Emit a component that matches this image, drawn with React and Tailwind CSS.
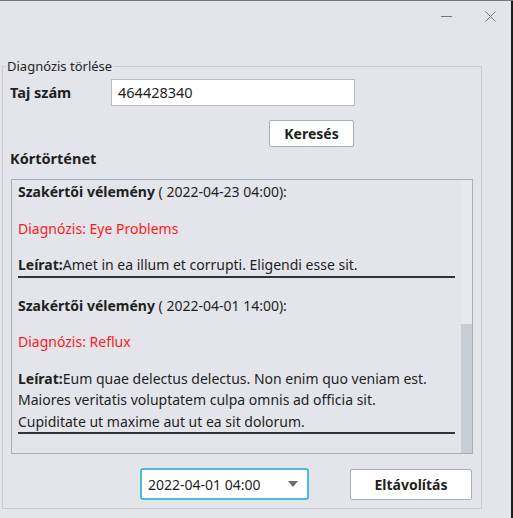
export default function App() {
  return (
    <div
      className="relative w-[513px] h-[518px] bg-[#e4e5ea] border-t border-[#7a7a7a] overflow-hidden text-[#1f1f1f]"
      style={{ fontFamily: '"Noto Sans", "Open Sans", sans-serif' }}
    >
      {/* ablak gombok */}
      <div className="flex justify-end items-center h-[30px] pr-[17px] gap-[33px]">
        <div className="w-[11px] h-px bg-[#777]" />
        <svg width="11" height="11" viewBox="0 0 11 11" className="text-[#777]">
          <path d="M0.5 0.5 L10.5 10.5 M10.5 0.5 L0.5 10.5" stroke="currentColor" strokeWidth="1" />
        </svg>
      </div>

      {/* asztal a jobb szélen */}
      <div className="absolute right-0 top-0 w-[2px] h-full bg-[#1c1c1c]" />

      <fieldset className="ml-[2px] mt-[27px] w-[480px] h-[451px] border border-[#c9cbd1] px-[7px] pb-[9px]">
        <legend className="text-[13px] leading-[17px] px-px -ml-[4px]">Diagnózis törlése</legend>

        <div className="flex items-center mt-[4px]">
          <span className="w-[101px] text-[14.5px] font-bold">Taj szám</span>
          <div className="w-[244px] h-[27px] bg-white border border-[#b8bdc8] flex items-center px-[6px] text-[14.5px]">
            464428340
          </div>
        </div>

        <div className="flex justify-end w-[344px] mt-[14px]">
          <button className="w-[85px] h-[27px] bg-white border border-[#a9adb8] rounded-[2px] text-[14px] font-bold">
            Keresés
          </button>
        </div>

        <div className="text-[14.5px] font-bold leading-[20px] mt-px">Kórtörténet</div>

        <div className="mt-[11px] ml-px w-[462px] h-[275px] border border-[#a7afbc] flex">
          <div className="flex-1 pl-[6px] pr-[6px] text-[14px]">
            <div className="leading-[21px] pt-px">
              <p><b>Szakértői vélemény</b> ( 2022-04-23 04:00):</p>
              <p className="mt-[16px] text-[#ff1a1a]">Diagnózis: Eye Problems</p>
              <p className="mt-[15px] pb-px"><b>Leírat:</b>Amet in ea illum et corrupti. Eligendi esse sit.</p>
              <div className="h-[1.5px] bg-[#333] w-[437px]" />
            </div>
            <div className="leading-[21.5px] mt-[17px]">
              <p><b>Szakértői vélemény</b> ( 2022-04-01 14:00):</p>
              <p className="mt-[15px] text-[#ff1a1a]">Diagnózis: Reflux</p>
              <p className="mt-[15px] w-[420px]">
                <b>Leírat:</b>Eum quae delectus delectus. Non enim quo veniam est. Maiores veritatis voluptatem culpa omnis ad officia sit. Cupiditate ut maxime aut ut ea sit dolorum.
              </p>
              <div className="h-[1.5px] bg-[#333] w-[437px]" />
            </div>
          </div>
          <div className="w-[11px] bg-[#e8e9ed] flex flex-col justify-end">
            <div className="h-[129px] bg-[#c8ccd4]" />
          </div>
        </div>

        <div className="flex items-center mt-[14px] ml-[130px]">
          <div className="w-[169px] h-[32px] border-2 border-[#4fb9da] rounded-[3px] bg-white flex items-center justify-between pl-[6px] pr-[9px] text-[14px]">
            <span>2022-04-01 04:00</span>
            <svg width="10" height="6" viewBox="0 0 10 6">
              <path d="M0 0 L10 0 L5 6 Z" fill="#6d6d6d" />
            </svg>
          </div>
          <button className="ml-[41px] w-[122px] h-[31px] bg-white border border-[#a9adb8] rounded-[2px] text-[14px] font-bold">
            Eltávolítás
          </button>
        </div>
      </fieldset>
    </div>
  )
}
